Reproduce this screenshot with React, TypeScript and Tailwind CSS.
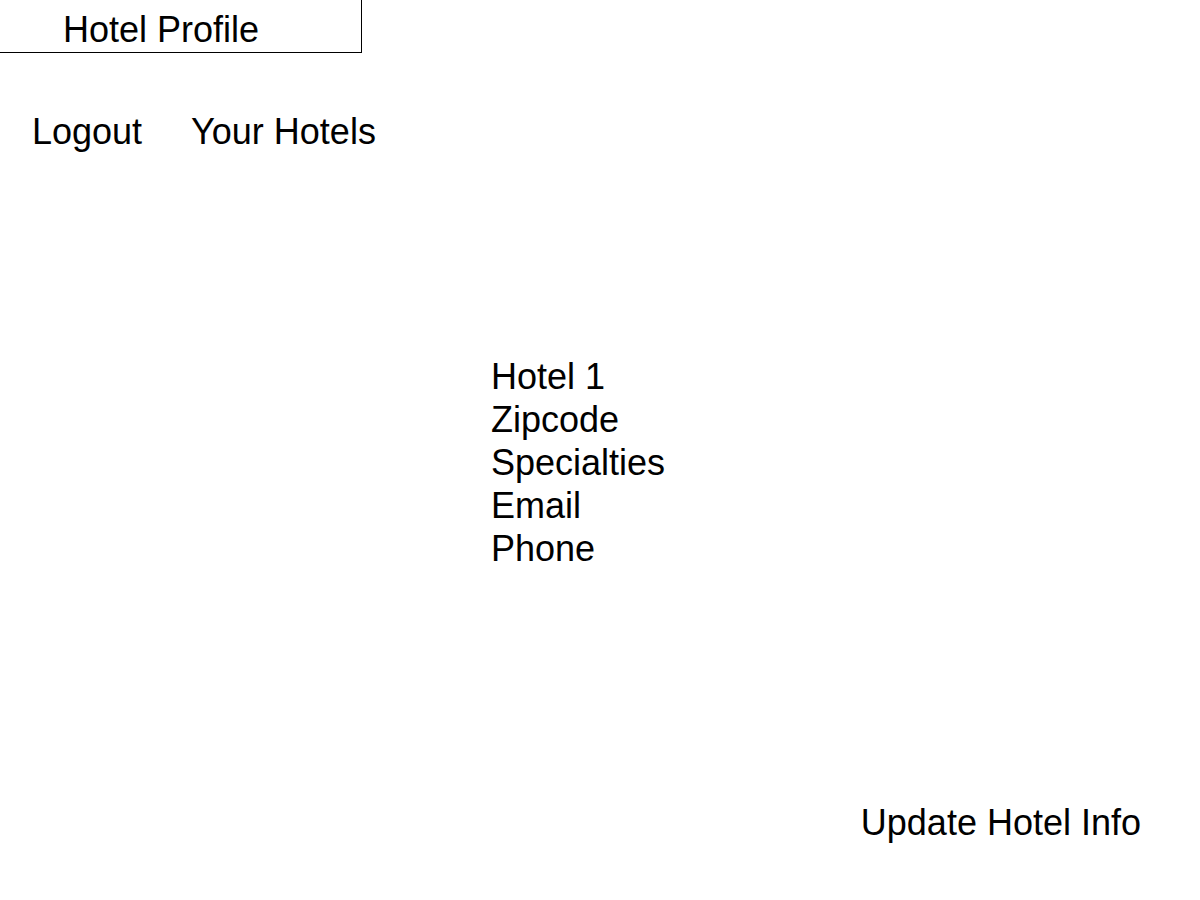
export default function App() {
  const details = ['Hotel 1', 'Zipcode', 'Specialties', 'Email', 'Phone'];

  return (
    <div className="w-[1200px] h-[900px] bg-white text-black overflow-hidden font-['Liberation_Sans',Arial,sans-serif] text-[36px] leading-[41px]">
      {/* title box */}
      <div className="-mt-px -ml-px w-[363px] h-[54px] border border-black pt-[9px] pl-[63px]">
        Hotel Profile
      </div>

      {/* nav */}
      <nav className="mt-[58px] pl-[32px] flex gap-[49px]">
        <a>Logout</a>
        <a>Your Hotels</a>
      </nav>

      {/* hotel details */}
      <div className="mt-[203px] pl-[491px] flex flex-col leading-[43px]">
        {details.map((d) => (
          <div key={d}>{d}</div>
        ))}
      </div>

      <div className="mt-[232px] pr-[59px] flex justify-end">
        <button className="leading-[41px]">Update Hotel Info</button>
      </div>
    </div>
  );
}
